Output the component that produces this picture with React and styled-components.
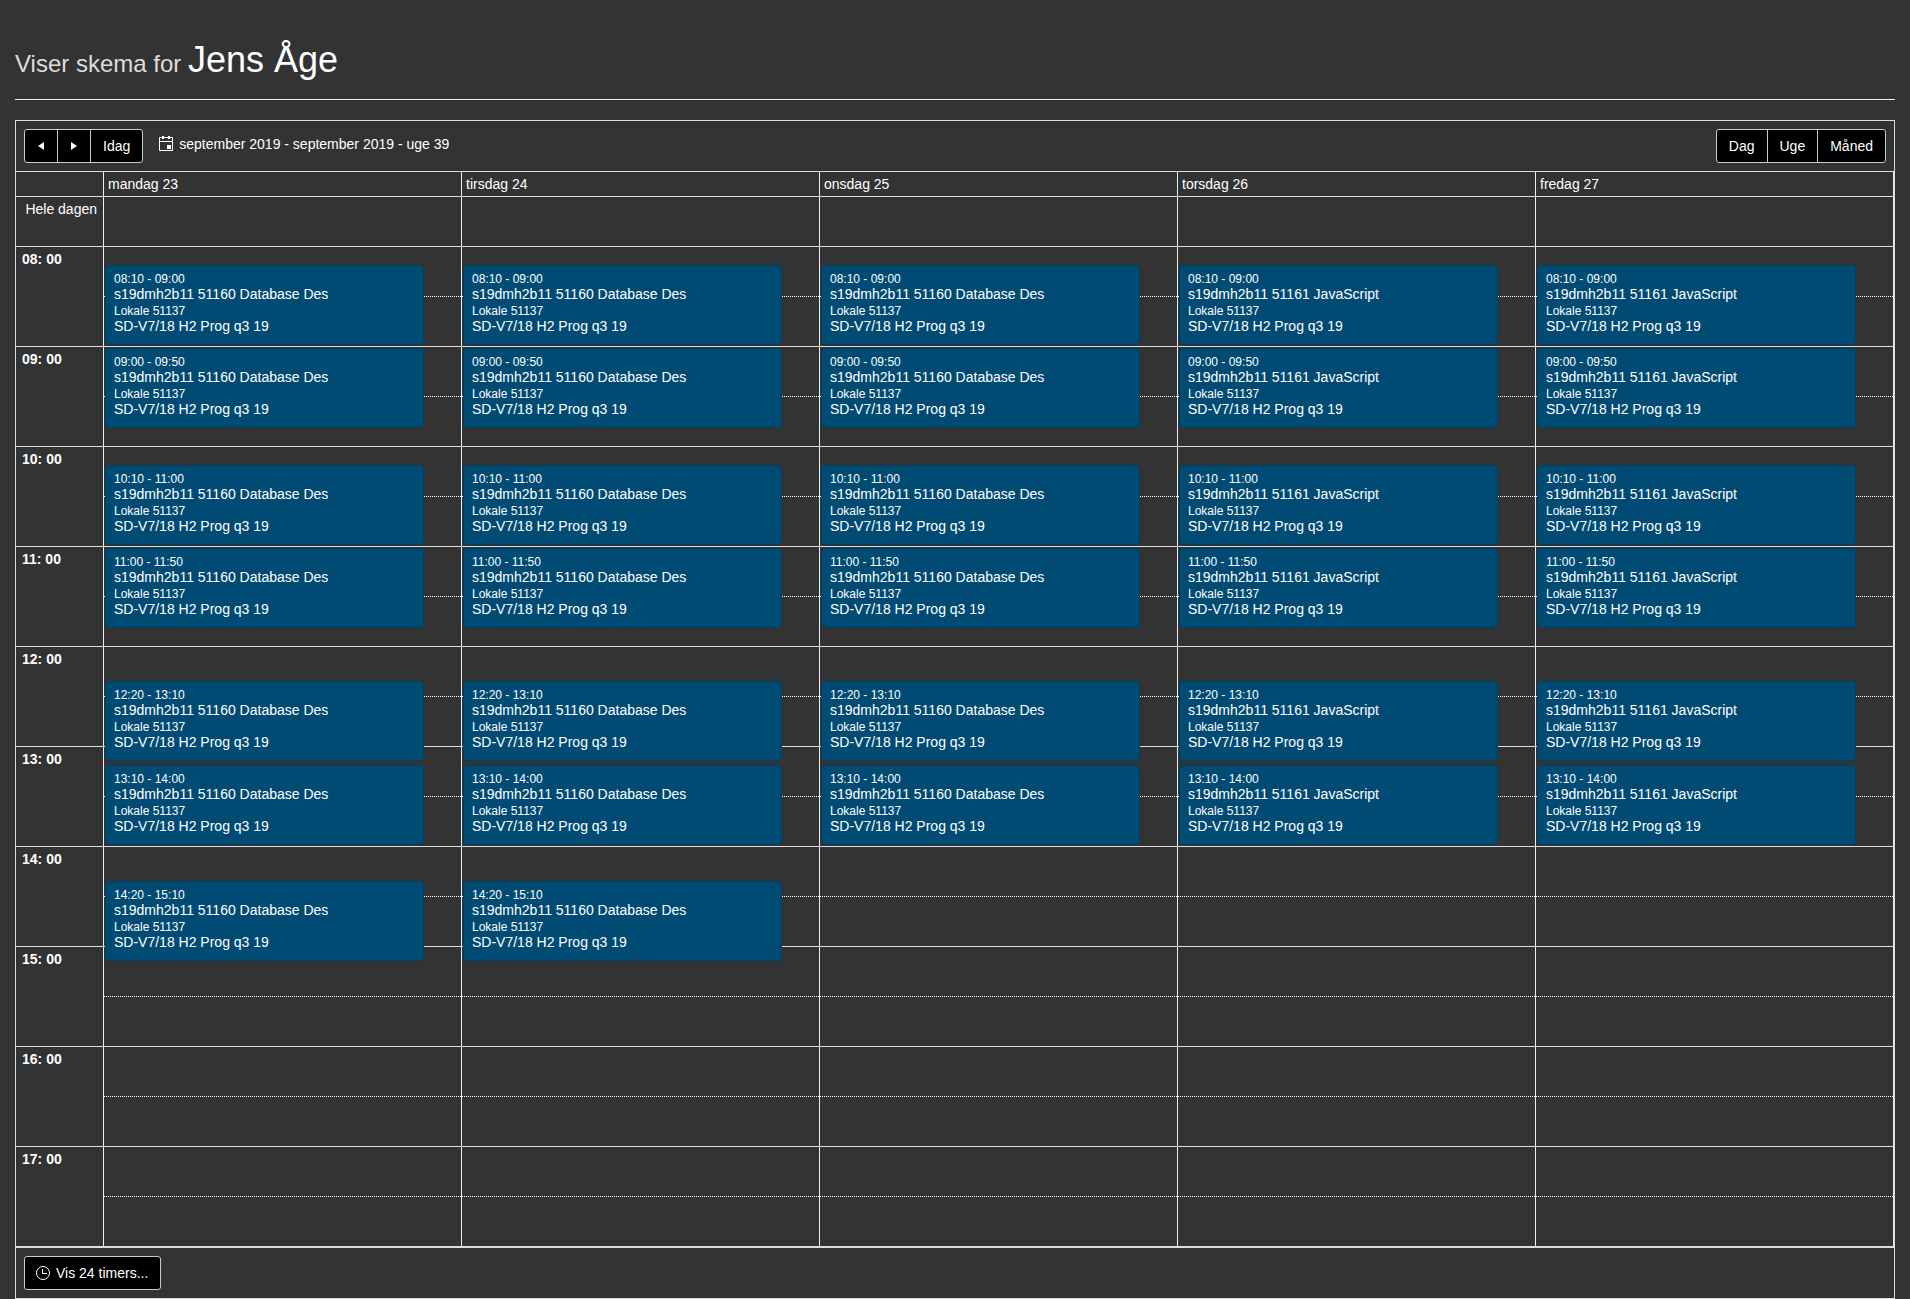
import React from "react";
import styled, { createGlobalStyle } from "styled-components";

const Global = createGlobalStyle`
  * { box-sizing: border-box; }
  body { margin: 0; background: #333; color: #fff; font: 14px/20px "Liberation Sans", Arial, sans-serif; }
  button { font: inherit; color: inherit; }
`;

const line = "#ddd";
const columnLine = "#eee";

const Page = styled.main`
  padding: 35px 15px 0;
`;
const Title = styled.h1`
  margin: 0 0 20px;
  padding: 5px 0 19px;
  border-bottom: 1px solid #eee;
  font-size: 36px;
  font-weight: 400;
  line-height: 40px;
`;
const Lead = styled.small`
  font-size: 24px;
  line-height: 1;
  color: #ddd;
`;
const Scheduler = styled.section`
  border: 1px solid ${line};
`;
const Toolbar = styled.header`
  display: flex;
  align-items: flex-start;
  padding: 8px;
  border-bottom: 1px solid ${line};
`;
const Footer = styled.footer`
  display: flex;
  padding: 8px;
  border-top: 1px solid ${line};
`;
const ButtonGroup = styled.div`
  display: flex;
`;
const Button = styled.button`
  display: flex;
  align-items: center;
  gap: 5px;
  height: 34px;
  padding: 0 ${(p) => (p.$icon ? 8 : 12)}px;
  background: #000;
  border: 1px solid #ccc;
  & + & { margin-left: -1px; }
  &:first-child { border-radius: 3px 0 0 3px; }
  &:last-child { border-radius: 0 3px 3px 0; }
  &:only-child { border-radius: 3px; padding: 0 12px 0 10px; }
`;
const Range = styled.div`
  display: flex;
  align-items: center;
  gap: 5px;
  flex: 1;
  padding: 5px 15px;
`;
const Table = styled.table`
  width: 100%;
  table-layout: fixed;
  border-collapse: separate;
  border-spacing: 0;
  border-bottom: 1px solid ${line};
`;
const Corner = styled.td`
  width: 88px;
  height: 24px;
  padding: 0;
  border-right: 1px solid ${columnLine};
`;
const DayHead = styled.th`
  height: 24px;
  padding: 2px 4px;
  border-right: 1px solid ${columnLine};
  font-weight: 400;
  text-align: left;
`;
const RowHead = styled.th`
  height: ${(p) => (p.$allDay ? 50 : 100)}px;
  padding: 2px 6px;
  border-top: 1px solid ${line};
  border-right: 1px solid ${columnLine};
  font-weight: ${(p) => (p.$allDay ? 400 : 700)};
  text-align: ${(p) => (p.$allDay ? "right" : "left")};
  vertical-align: top;
`;
const Slot = styled.td`
  position: relative;
  padding: 0;
  border-top: 1px solid ${line};
  border-right: 1px solid ${columnLine};
  vertical-align: top;
`;
const HalfHour = styled.div`
  height: 50px;
  border-bottom: 1px dotted #fff;
`;
const Rest = styled.div`
  height: 49px;
`;
const Event = styled.article`
  position: absolute;
  z-index: 1;
  left: 1px;
  right: calc(10% + 1px);
  height: 80px;
  padding: 4px 8px;
  border: 1px solid #004064;
  border-radius: 4px;
  background: #004b74;
  line-height: 16px;
  white-space: nowrap;
  overflow: hidden;
`;
const Small = styled.div`
  padding-top: 2px;
  font-size: 12px;
  line-height: 14px;
`;

const days = ["mandag 23", "tirsdag 24", "onsdag 25", "torsdag 26", "fredag 27"];
const hours = [8, 9, 10, 11, 12, 13, 14, 15, 16, 17];
const lessons = ["08:10 - 09:00", "09:00 - 09:50", "10:10 - 11:00", "11:00 - 11:50", "12:20 - 13:10", "13:10 - 14:00", "14:20 - 15:10"];

function findLesson(day, hour) {
  const time = lessons.find((l) => Number(l.slice(0, 2)) === hour);
  if (!time || (hour === 14 && day > 1)) return null;
  return { time, minute: Number(time.slice(3, 5)), course: day < 3 ? "51160 Database Des" : "51161 JavaScript" };
}

function Lesson({ time, minute, course }) {
  return (
    <Event style={{ top: Math.round((minute * 100) / 60) + 1 }}>
      <Small>{time}</Small>
      <div>s19dmh2b11 {course}</div>
      <Small>Lokale 51137</Small>
      <div>SD-V7/18 H2 Prog q3 19</div>
    </Event>
  );
}

const Arrow = ({ d }) => (
  <svg width="16" height="16" viewBox="0 0 16 16" fill="#fff" aria-hidden="true"><path d={d} /></svg>
);

export default function App() {
  return (
    <Page>
      <Global />
      <Title><Lead>Viser skema for </Lead>Jens Åge</Title>
      <Scheduler>
        <Toolbar>
          <ButtonGroup>
            <Button $icon aria-label="Forrige"><Arrow d="M5 8l6-4v8z" /></Button>
            <Button $icon aria-label="Næste"><Arrow d="M11 8l-6-4v8z" /></Button>
            <Button>Idag</Button>
          </ButtonGroup>
          <Range>
            <svg width="16" height="16" viewBox="0 0 16 16" aria-hidden="true">
              <path d="M1.5 1.5h13v13h-13zM1.5 5.5h13" fill="none" stroke="#fff" />
              <path d="M4 0h2v3H4zM10 0h2v3h-2zM9 9h4v4H9z" fill="#fff" />
            </svg>
            <span>september 2019 - september 2019 - uge 39</span>
          </Range>
          <ButtonGroup>
            <Button>Dag</Button>
            <Button>Uge</Button>
            <Button>Måned</Button>
          </ButtonGroup>
        </Toolbar>
        <Table>
          <thead>
            <tr>
              <Corner />
              {days.map((d) => <DayHead key={d} scope="col">{d}</DayHead>)}
            </tr>
          </thead>
          <tbody>
            <tr>
              <RowHead scope="row" $allDay>Hele dagen</RowHead>
              {days.map((d) => <Slot key={d} />)}
            </tr>
            {hours.map((h) => (
              <tr key={h}>
                <RowHead scope="row">{String(h).padStart(2, "0")}: 00</RowHead>
                {days.map((d, i) => {
                  const lesson = findLesson(i, h);
                  return (
                    <Slot key={d}>
                      <HalfHour />
                      <Rest />
                      {lesson && <Lesson {...lesson} />}
                    </Slot>
                  );
                })}
              </tr>
            ))}
          </tbody>
        </Table>
        <Footer>
          <Button>
            <svg width="16" height="16" viewBox="0 0 16 16" fill="none" stroke="#fff" aria-hidden="true">
              <circle cx="8" cy="8" r="6.5" /><path d="M7.5 4v4.5H12" />
            </svg>
            Vis 24 timers...
          </Button>
        </Footer>
      </Scheduler>
    </Page>
  );
}
